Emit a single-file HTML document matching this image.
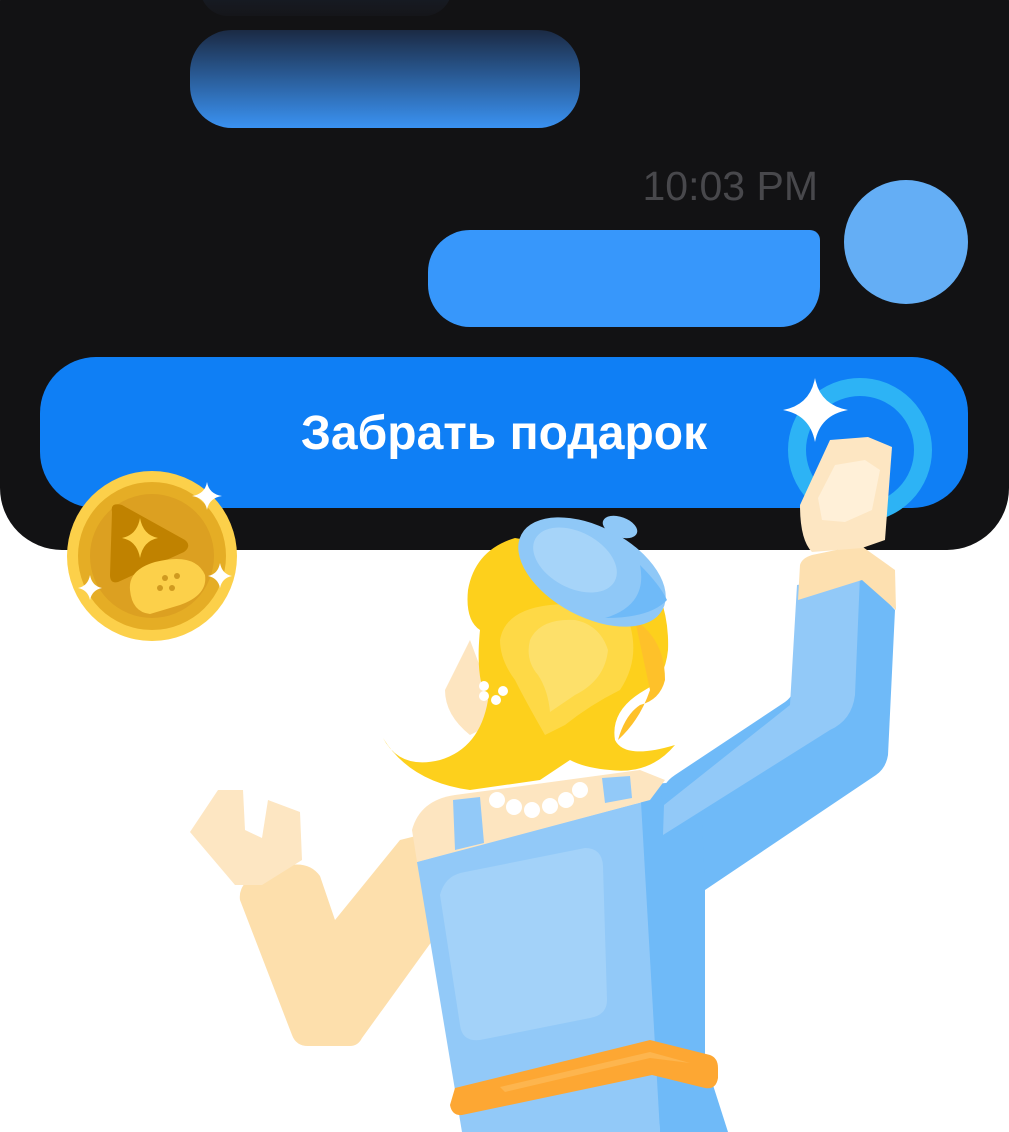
<!DOCTYPE html>
<html><head><meta charset="utf-8"><style>
html,body{margin:0;padding:0;background:#fff;width:1009px;height:1132px;overflow:hidden;font-family:"Liberation Sans","DejaVu Sans",sans-serif}
</style></head><body>
<svg width="1009" height="1132" viewBox="0 0 1009 1132" xmlns="http://www.w3.org/2000/svg">
<defs>
<linearGradient id="g1" x1="0" y1="0" x2="0" y2="1"><stop offset="0" stop-color="#1b2a44"/><stop offset="1" stop-color="#3a92f2"/></linearGradient>
<linearGradient id="g0" x1="0" y1="0" x2="0" y2="1"><stop offset="0" stop-color="#1a2436"/><stop offset="1" stop-color="#15161a"/></linearGradient>
</defs>
<rect x="0" y="-60" width="1009" height="610" rx="62" fill="#121214"/>
<rect x="200" y="-40" width="252" height="56" rx="28" fill="url(#g0)"/>
<rect x="190" y="30" width="390" height="98" rx="42" fill="url(#g1)"/>
<text x="818" y="200" text-anchor="end" font-size="41" fill="#48484c" font-family="Liberation Sans, sans-serif">10:03 PM</text>
<circle cx="906" cy="242" r="62" fill="#64aef5"/>
<path d="M470 230 H810 a10 10 0 0 1 10 10 V287 a40 40 0 0 1 -40 40 H470 a42 42 0 0 1 -42 -42 V272 a42 42 0 0 1 42 -42Z" fill="#3797fb"/>
<rect x="40" y="357" width="928" height="151" rx="56" fill="#0f7ff5"/>
<text x="504" y="449" text-anchor="middle" font-size="48" font-weight="bold" fill="#fff" font-family="Liberation Sans, sans-serif">Забрать подарок</text>
<circle cx="860" cy="450" r="63" fill="none" stroke="#2db3f5" stroke-width="18"/>
<path d="M815 378 Q820 405 848 410 Q820 415 815 442 Q810 415 783 410 Q810 405 815 378Z" fill="#fff"/>
<!-- coin -->
<circle cx="152" cy="556" r="85" fill="#fcd04a"/>
<circle cx="152" cy="556" r="74" fill="#e5ad25"/>
<circle cx="152" cy="556" r="62" fill="#dca021"/>
<path d="M112 512 Q110 502 122 505 L185 540 Q192 546 184 552 L118 582 Q110 584 110 575Z" fill="#c08200"/>
<path d="M140 518 Q143 535 158 538 Q143 541 140 558 Q137 541 122 538 Q137 535 140 518Z" fill="#fcd04a"/>
<path d="M130 590 Q128 570 155 562 Q195 552 205 575 Q208 595 180 605 L150 614 Q132 612 130 590Z" fill="#fcd04a"/>
<circle cx="165" cy="578" r="3" fill="#d09a20"/><circle cx="177" cy="576" r="3" fill="#d09a20"/><circle cx="172" cy="588" r="3" fill="#d09a20"/><circle cx="160" cy="588" r="3" fill="#d09a20"/>
<path d="M207 482 Q209 494 222 496 Q209 498 207 510 Q205 498 192 496 Q205 494 207 482Z" fill="#fff"/>
<path d="M90 575 Q92 586 102 588 Q92 590 90 600 Q88 590 78 588 Q88 586 90 575Z" fill="#fff"/>
<path d="M220 563 Q222 574 232 576 Q222 578 220 588 Q218 578 208 576 Q218 574 220 563Z" fill="#fff"/>
<!-- left arm -->
<path d="M240 900 L292 1035 Q296 1046 308 1046 L350 1046 Q358 1046 362 1038 L440 930 L420 835 L400 840 L335 920 L320 876 Q310 862 290 865 L255 875 Q238 885 240 900Z" fill="#fddfac"/>
<path d="M190 832 L218 790 L243 790 L245 830 L262 838 L268 800 L300 812 L302 860 L262 885 L235 885Z" fill="#fde6c2"/>
<!-- torso -->
<path d="M417 862 L460 850 L650 800 L660 1132 L462 1132Z" fill="#92c9f8"/>
<path d="M440 895 Q445 875 465 872 L585 848 Q602 848 603 866 L607 1000 Q607 1015 590 1018 L480 1040 Q462 1042 460 1025Z" fill="#a3d2f9"/>
<path d="M640 785 L705 780 L705 1132 L660 1132Z" fill="#6fbaf8"/>
<path d="M705 1132 L705 1060 L728 1132Z" fill="#6fbaf8"/>
<!-- right arm -->
<path d="M662 800 Q660 785 675 775 L785 702 Q795 695 796 680 L800 580 L862 574 L895 610 L888 755 Q886 768 876 775 L705 890 L700 780Z" fill="#6fbaf8"/>
<path d="M664 805 L790 705 L797 585 L860 575 L855 695 Q852 720 830 730 L663 835Z" fill="#92c9f8"/>
<path d="M798 600 L800 565 Q802 558 812 555 L860 545 L895 570 L896 610 L862 580Z" fill="#fde0b0"/>
<path d="M800 505 L830 440 L868 437 L892 447 L885 540 L862 548 L812 552 Q800 540 800 505Z" fill="#fde6c2"/>
<path d="M818 498 L835 465 L865 460 L880 470 L872 510 L845 522 L822 520Z" fill="#fff0d8"/>
<!-- neck / shoulders -->
<path d="M412 830 Q420 800 455 795 L640 770 L665 780 L650 800 L470 848 L417 862Z" fill="#fde5c0"/>
<path d="M453 800 L480 797 L484 843 L455 850Z" fill="#92c9f8"/>
<path d="M602 778 L630 776 L632 798 L605 803Z" fill="#92c9f8"/>
<g fill="#fff"><circle cx="497" cy="800" r="8"/><circle cx="514" cy="807" r="8"/><circle cx="532" cy="810" r="8"/><circle cx="550" cy="806" r="8"/><circle cx="566" cy="800" r="8"/><circle cx="580" cy="790" r="8"/></g>
<!-- face hint -->
<path d="M445 690 L470 640 L500 720 L470 735 Q445 715 445 690Z" fill="#fde5c0"/>
<!-- hair -->
<path d="M383 738 Q400 770 440 760 Q480 748 488 700 Q475 680 480 630 Q465 620 468 590 Q475 550 515 538 L640 560 Q670 600 668 650 Q665 680 645 690 Q610 710 615 740 Q625 760 675 745 Q650 775 610 770 Q585 768 570 760 L540 780 L470 790 Q410 782 383 738Z" fill="#fdd01c"/>
<path d="M500 640 Q505 610 550 605 Q600 600 630 625 Q640 660 620 690 Q590 705 565 725 L545 735 Q525 700 515 680 Q500 660 500 640Z" fill="#fed946"/>
<path d="M530 640 Q540 618 575 620 Q600 625 608 650 Q605 680 575 695 L550 712 Q548 690 538 675 Q525 660 530 640Z" fill="#fde06a"/>
<path d="M635 620 Q665 640 665 680 Q660 700 640 705 Q625 715 618 740 Q640 720 650 690Z" fill="#fec12a"/>
<g fill="#fff"><circle cx="484" cy="686" r="5"/><circle cx="503" cy="691" r="5"/><circle cx="484" cy="696" r="5"/><circle cx="496" cy="700" r="5"/></g>
<!-- beret -->
<ellipse cx="592" cy="572" rx="80" ry="45" transform="rotate(28 592 572)" fill="#8fc8f7"/>
<path d="M605 618 Q650 618 667 600 Q660 585 640 565 Q648 605 605 618Z" fill="#6fbaf8"/>
<ellipse cx="575" cy="560" rx="45" ry="28" transform="rotate(28 575 560)" fill="#a6d4f9"/>
<ellipse cx="620" cy="527" rx="18" ry="10" transform="rotate(20 620 527)" fill="#8fc8f7"/>
<!-- belt -->
<path d="M455 1088 L650 1040 L710 1055 Q718 1058 718 1068 L718 1078 Q716 1090 705 1088 L652 1075 L462 1115 Q452 1116 450 1105 Z" fill="#fda733"/>
<path d="M500 1087 L650 1052 L690 1063 L650 1058 L505 1092Z" fill="#fdb54e"/>
</svg>
</body></html>
